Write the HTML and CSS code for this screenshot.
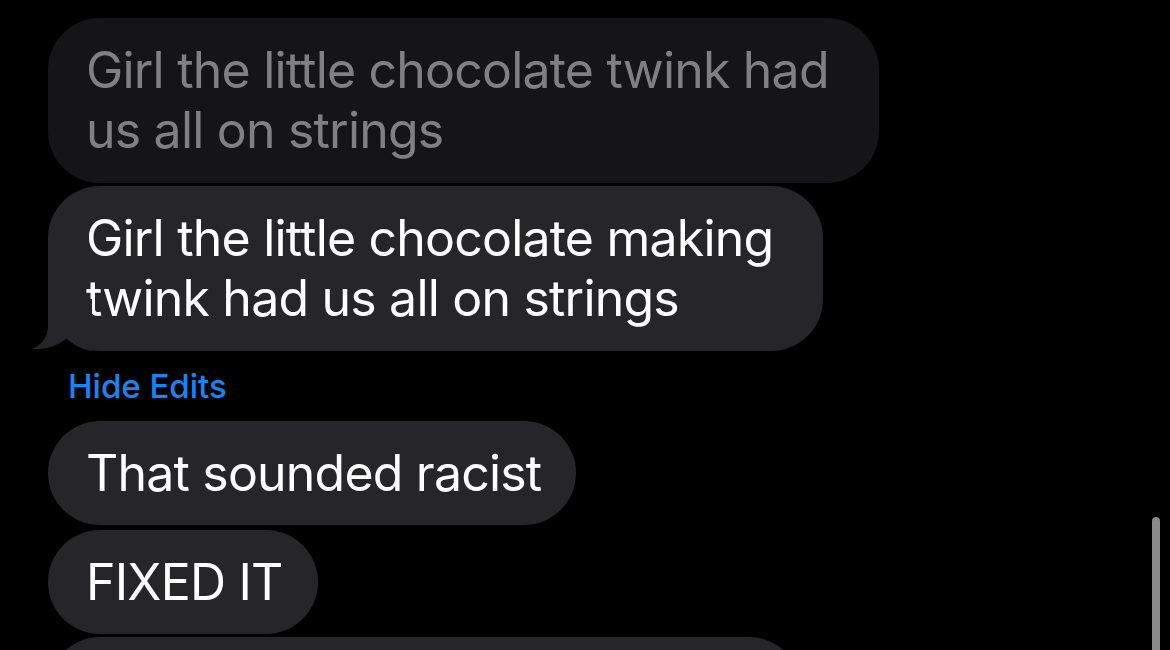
FILE: index.html
```html
<!DOCTYPE html>
<html lang="en">
<head>
  <meta charset="UTF-8" />
  <title>Messages</title>
  <link rel="stylesheet" href="styles.css">
</head>
<body>
  <div class="thread">
    <div class="bubble old">Girl the little chocolate twink had<br>us all on strings</div>
    <div class="bubble tail">Girl the little chocolate making<br>twink had us all on strings
      <svg class="tail-svg" width="60" height="52" viewBox="0 0 60 52">
        <path d="M16 0 L16 26 C16 38 10 46 0 50 C12 51 24 48 35 39 C42 46 50 51 60 52 L60 0 Z" fill="#262629"/>
      </svg>
    </div>
    <div class="hide-edits">Hide Edits</div>
    <div class="bubble">That sounded racist</div>
    <div class="bubble">FIXED IT</div>
    <div class="bubble next">&nbsp;</div>
  </div>
  <div class="scrollbar"></div>
</body>
</html>
```

FILE: styles.css
```css
body {
  margin: 0;
  background: #000;
  font-family: Inter, "Liberation Sans", sans-serif;
  height: 650px;
  overflow: hidden;
}

.thread {
  display: flex;
  flex-direction: column;
  align-items: flex-start;
  padding: 18px 0 0 48px;
}

.bubble {
  position: relative;
  background: #262629;
  color: #fff;
  font-size: 50px;
  line-height: 60px;
  letter-spacing: -0.8px;
  padding: 22px 35px 22px 38px;
  border-radius: 52px;
  margin-bottom: 5px;
}

.bubble.old {
  background: #151517;
  color: #808084;
  padding: 22px 50px 23px 38px;
  margin-bottom: 3px;
}

.bubble.tail {
  padding: 22px 50px 23px 38px;
}

.tail-svg {
  position: absolute;
  left: -16px;
  bottom: 0;
}

.hide-edits {
  color: #1685f5;
  font-size: 33px;
  font-weight: 500;
  line-height: 40px;
  margin: 10px 0 15px 20px;
}

.bubble.next {
  width: 680px;
  margin-top: -2px;
}

.scrollbar {
  position: absolute;
  left: 1152px;
  top: 517px;
  width: 8px;
  height: 140px;
  border-radius: 4px;
  background: #8a8a8a;
}
```
